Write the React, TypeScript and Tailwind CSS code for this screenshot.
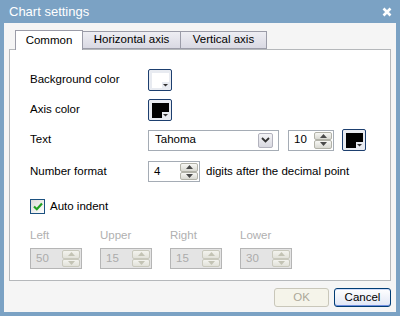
import React from "react";

const font = { fontFamily: '"Liberation Sans", Arial, sans-serif' };

function Tri({ up, color }: { up?: boolean; color: string }) {
  return (
    <svg width="7" height="4" viewBox="0 0 7 4">
      {up ? <polygon points="0,4 7,4 3.5,0" fill={color} /> : <polygon points="0,0 7,0 3.5,4" fill={color} />}
    </svg>
  );
}

function SpinBtns({ disabled }: { disabled?: boolean }) {
  const c = disabled ? "#c3c3b4" : "#4a4a4a";
  const cls = disabled
    ? "flex-1 flex items-center justify-center border border-[#c9c9bd] bg-gradient-to-b from-[#f3f3ee] to-[#e2e2da] rounded-[2px]"
    : "flex-1 flex items-center justify-center border border-[#b2b2a8] bg-gradient-to-b from-[#f7f7f4] to-[#d9d9d2] rounded-[2px]";
  return (
    <div className="flex flex-col w-[18px] h-[17px]">
      <div className={cls}>
        <Tri up color={c} />
      </div>
      <div className={cls}>
        <Tri color={c} />
      </div>
    </div>
  );
}

function Spinner({ value, wide, disabled }: { value: string; wide?: boolean; disabled?: boolean }) {
  return (
    <div
      className={`flex items-center h-[21px] ${wide ? "w-[46px]" : "w-[52px]"} border pl-[5px] pr-[1px] ${
        disabled ? "border-[#b5b5b5] bg-[#e4e4e4] text-[#ababab]" : "border-[#a5acb5] bg-white text-black"
      }`}
    >
      <span className="flex-1 text-[11.5px] leading-none">{value}</span>
      <SpinBtns disabled={disabled} />
    </div>
  );
}

function ColorBtn({ color }: { color: string }) {
  return (
    <div className="w-[24px] h-[22px] border border-[#1d3f6f] rounded-[2px] bg-[#e8ebf1] pl-[3px] pt-[3px]">
      <svg width="17" height="15" viewBox="0 0 17 15">
        <polygon points="0,0 17,0 17,9 10,9 10,15 0,15" fill={color} />
        <polygon points="11,11 16,11 13.5,13.5" fill="#333" />
      </svg>
    </div>
  );
}

export default function App() {
  return (
    <div style={font} className="w-[400px] h-[316px] bg-[#7ba2c4] flex flex-col px-[4px] pb-[4px] text-[11.5px] text-black">
      <div className="h-[23px] flex items-center justify-between pl-[5px] pr-[4px]">
        <span className="text-white text-[13px]">Chart settings</span>
        <svg width="10" height="10" viewBox="0 0 10 10">
          <path d="M1.5 1.5 L8.5 8.5 M8.5 1.5 L1.5 8.5" stroke="white" strokeWidth="2.6" />
        </svg>
      </div>
      <div className="flex-1 bg-[#f5f5f5] flex flex-col px-[5px] pt-[7px]">
        <div className="flex pl-[6px] h-[19px] relative z-10">
          <div className="w-[68px] h-[20px] bg-white border border-[#9b9ca8] border-b-0 flex items-center justify-center">
            Common
          </div>
          <div className="w-[98px] mt-[1px] h-[18px] bg-gradient-to-b from-[#eeeef3] to-[#d9d9e3] border border-[#9b9ca8] border-l-0 flex items-center justify-center">
            Horizontal axis
          </div>
          <div className="w-[86px] mt-[1px] h-[18px] bg-gradient-to-b from-[#eeeef3] to-[#d9d9e3] border border-[#9b9ca8] border-l-0 flex items-center justify-center">
            Vertical axis
          </div>
        </div>
        <div className="h-[232px] bg-white border border-[#b5b8bb] flex flex-col pl-[20px] pt-[19px]">
          <div className="flex items-center h-[22px]">
            <span className="w-[118px]">Background color</span>
            <ColorBtn color="#ffffff" />
          </div>
          <div className="flex items-center h-[22px] mt-[8px]">
            <span className="w-[118px]">Axis color</span>
            <ColorBtn color="#000000" />
          </div>
          <div className="flex items-center h-[22px] mt-[8px]">
            <span className="w-[118px]">Text</span>
            <div className="w-[131px] h-[21px] border border-[#a5acb5] bg-white flex items-center pl-[6px] pr-[5px]">
              <span className="flex-1">Tahoma</span>
              <div className="w-[15px] h-[15px] border border-[#b2b2bd] rounded-[2px] bg-gradient-to-b from-[#f4f4f7] to-[#d8d8e0] flex items-center justify-center">
                <svg width="9" height="6" viewBox="0 0 9 6">
                  <path d="M1 1 L4.5 4.5 L8 1" stroke="#333" strokeWidth="1.8" fill="none" />
                </svg>
              </div>
            </div>
            <div className="ml-[9px]">
              <Spinner value="10" wide />
            </div>
            <div className="ml-[8px]">
              <ColorBtn color="#000000" />
            </div>
          </div>
          <div className="flex items-center h-[21px] mt-[10px]">
            <span className="w-[118px]">Number format</span>
            <Spinner value="4" />
            <span className="ml-[6px]">digits after the decimal point</span>
          </div>
          <div className="flex items-center h-[15px] mt-[17px]">
            <div className="w-[15px] h-[15px] border border-[#1c5180] bg-gradient-to-br from-[#dcdcd7] to-[#ffffff] flex items-center justify-center">
              <svg width="10" height="9" viewBox="0 0 10 9">
                <path d="M1 4.5 L3.8 7.2 L9 1.5" stroke="#21a121" strokeWidth="2.2" fill="none" />
              </svg>
            </div>
            <span className="ml-[5px]">Auto indent</span>
          </div>
          <div className="flex mt-[14px] text-[#b0b0b0] gap-[18px]">
            {[
              ["Left", "50"],
              ["Upper", "15"],
              ["Right", "15"],
              ["Lower", "30"],
            ].map(([l, v]) => (
              <div key={l} className="flex flex-col w-[52px]">
                <span className="h-[14px] leading-[14px]">{l}</span>
                <div className="mt-[6px]">
                  <Spinner value={v} disabled />
                </div>
              </div>
            ))}
          </div>
        </div>
        <div className="flex justify-end gap-[5px] mt-[7px] pr-[0px]">
          <div className="w-[55px] h-[19px] border border-[#c9c7ba] rounded-[3px] bg-[#f5f4ea] text-[#aca899] flex items-center justify-center">
            OK
          </div>
          <div className="w-[57px] h-[19px] border border-[#003c74] rounded-[3px] bg-gradient-to-b from-[#ffffff] to-[#e0e6f5] shadow-[inset_0_-1px_0_#6f8ee0,inset_0_1px_0_#cfdcf9] flex items-center justify-center">
            Cancel
          </div>
        </div>
      </div>
    </div>
  );
}
